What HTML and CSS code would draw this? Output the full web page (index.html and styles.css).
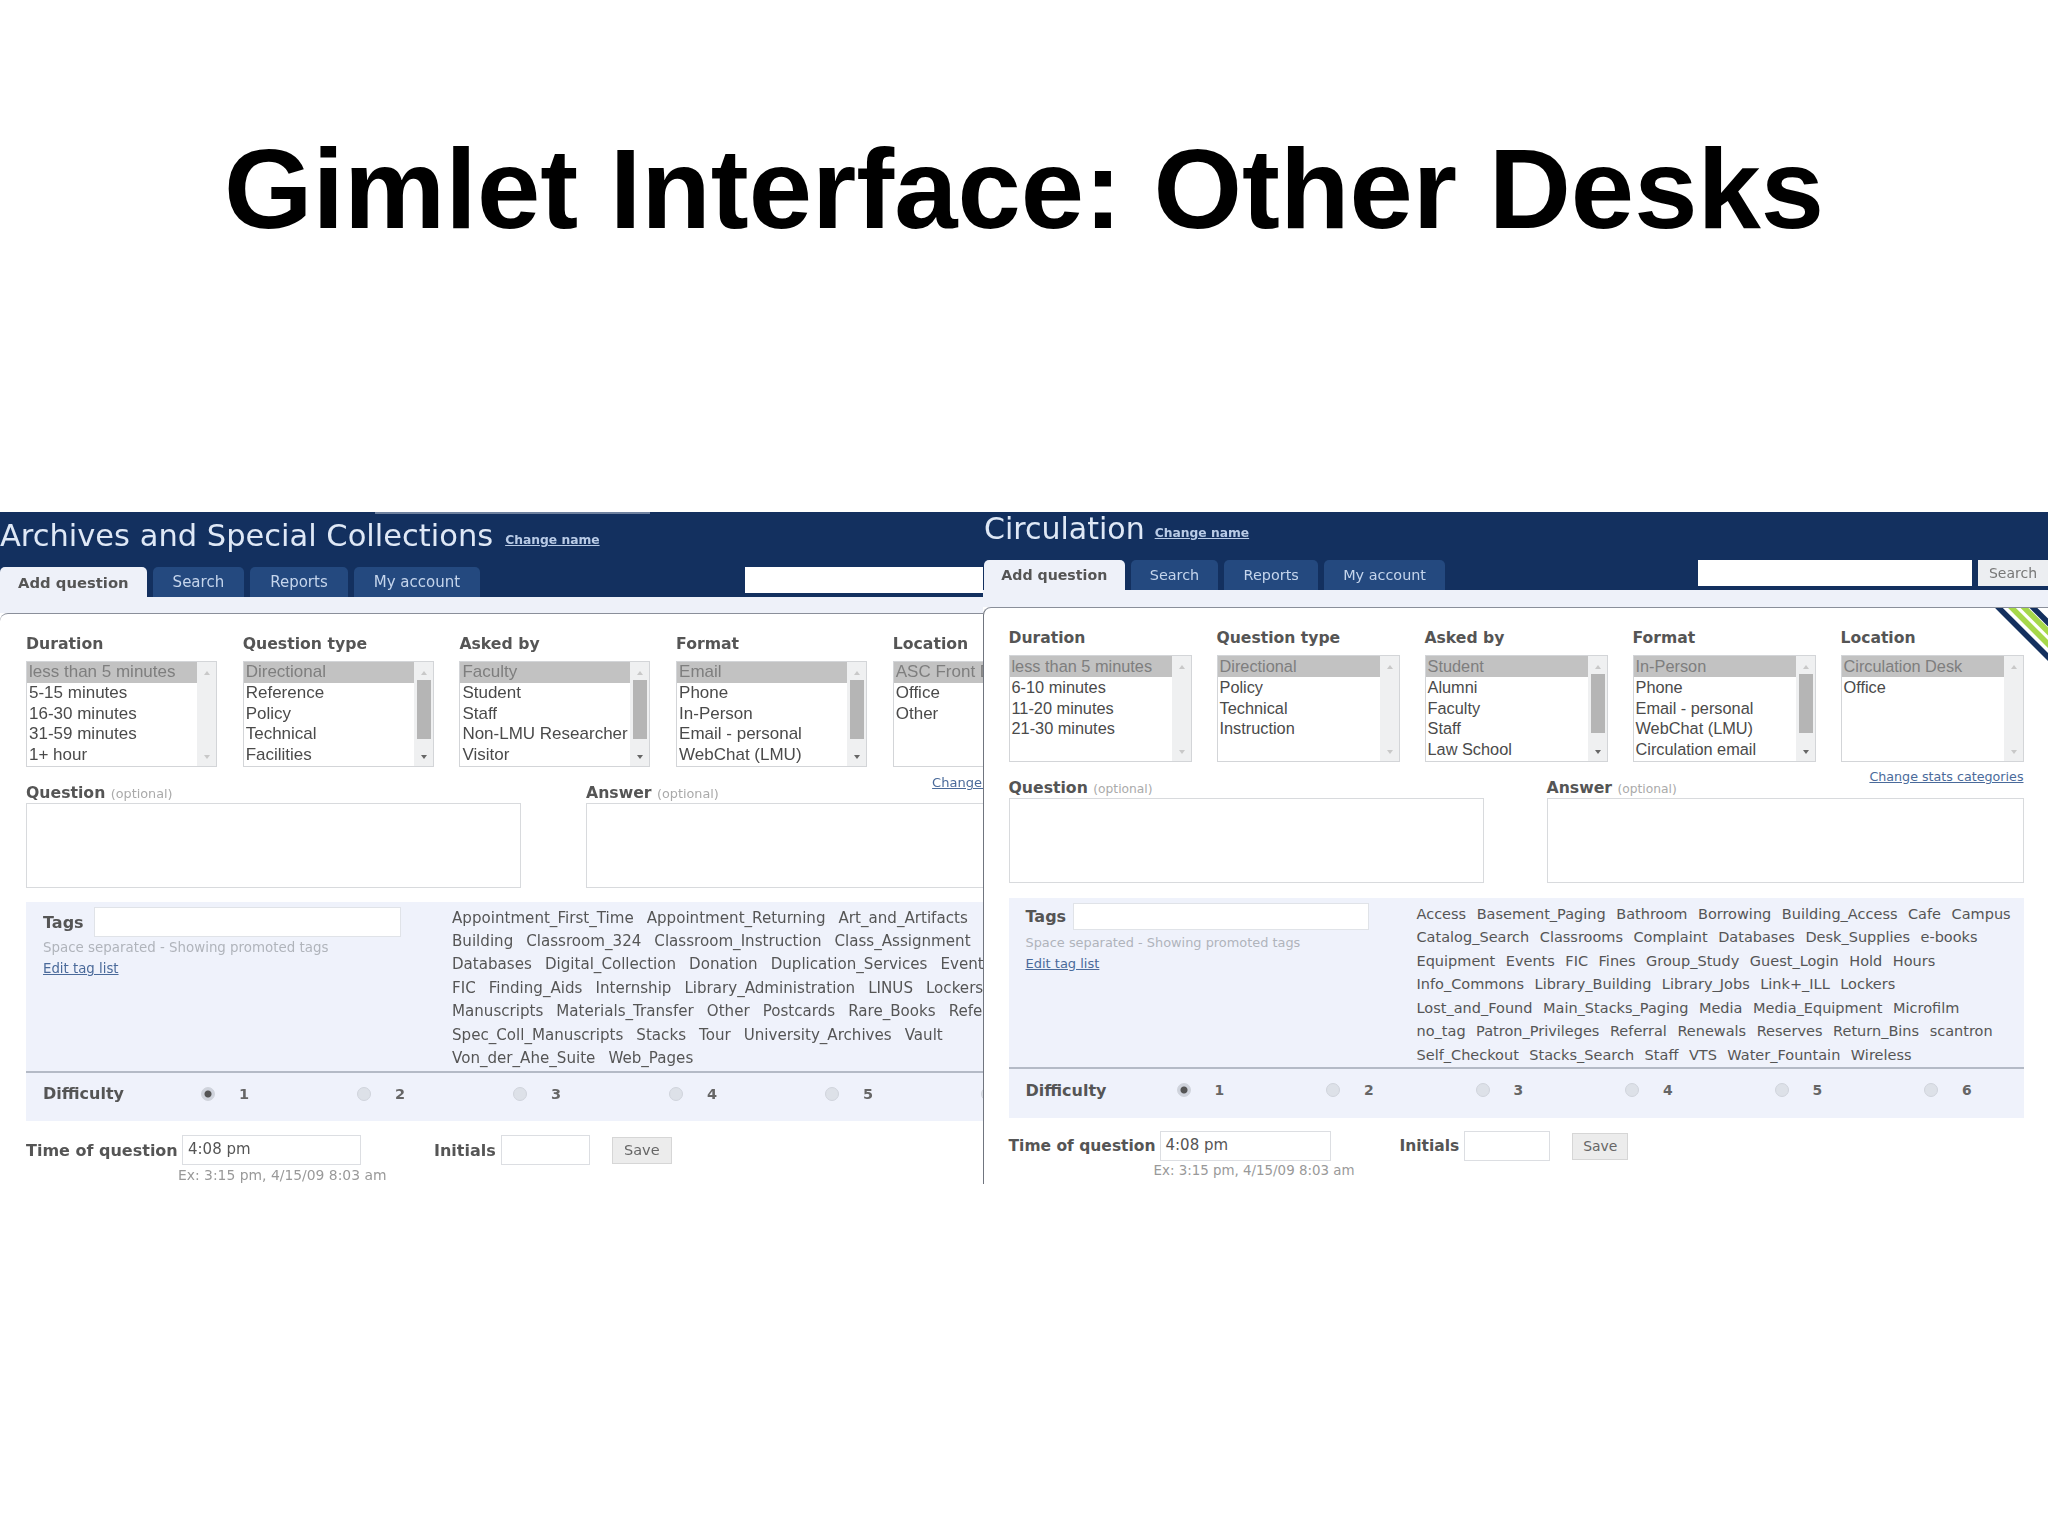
FILE: index.html
```html
<!DOCTYPE html>
<html lang="en">
<head>
<meta charset="utf-8">
<title>Gimlet Interface: Other Desks</title>
<link rel="stylesheet" href="styles.css">
</head>
<body>
<header class="slide-head"><h1>Gimlet Interface: Other Desks</h1></header>
<div class="shots">

<section class="panel left">
  <div class="inner">
    <div class="hd">
      <div class="title-row"><span class="desk">Archives and Special Collections</span><a class="rename">Change name</a></div>
      <nav class="nav">
        <a class="tab on">Add question</a><a class="tab">Search</a><a class="tab">Reports</a><a class="tab">My account</a>
        <div class="srch"><span class="srch-in"></span></div>
      </nav>
    </div>
    <div class="band"></div>
    <main class="main">
      <div class="lists">
        <div class="col"><div class="lab">Duration</div>
          <div class="sel"><div class="opts"><div class="opt on">less than 5 minutes</div><div class="opt">5-15 minutes</div><div class="opt">16-30 minutes</div><div class="opt">31-59 minutes</div><div class="opt">1+ hour</div></div><div class="sb"><i class="up"></i><i class="dn"></i></div></div></div>
        <div class="col"><div class="lab">Question type</div>
          <div class="sel"><div class="opts"><div class="opt on">Directional</div><div class="opt">Reference</div><div class="opt">Policy</div><div class="opt">Technical</div><div class="opt">Facilities</div></div><div class="sb live"><i class="up"></i><b class="thumb"></b><i class="dn"></i></div></div></div>
        <div class="col"><div class="lab">Asked by</div>
          <div class="sel"><div class="opts"><div class="opt on">Faculty</div><div class="opt">Student</div><div class="opt">Staff</div><div class="opt">Non-LMU Researcher</div><div class="opt">Visitor</div></div><div class="sb live"><i class="up"></i><b class="thumb"></b><i class="dn"></i></div></div></div>
        <div class="col"><div class="lab">Format</div>
          <div class="sel"><div class="opts"><div class="opt on">Email</div><div class="opt">Phone</div><div class="opt">In-Person</div><div class="opt">Email - personal</div><div class="opt">WebChat (LMU)</div></div><div class="sb live"><i class="up"></i><b class="thumb"></b><i class="dn"></i></div></div></div>
        <div class="col"><div class="lab">Location</div>
          <div class="sel"><div class="opts"><div class="opt on">ASC Front Desk</div><div class="opt">Office</div><div class="opt">Other</div></div><div class="sb"><i class="up"></i><i class="dn"></i></div></div></div>
      </div>
      <div class="qa">
        <div class="qa-col"><div class="qa-head"><span class="lab2">Question <small>(optional)</small></span></div><div class="ta"></div></div>
        <div class="qa-col"><div class="qa-head"><span class="lab2">Answer <small>(optional)</small></span><a class="cats">Change stats categories</a></div><div class="ta"></div></div>
      </div>
      <div class="tags">
        <div class="tags-side">
          <div class="tags-row"><span class="lab3">Tags</span><span class="tag-in"></span></div>
          <div class="hint">Space separated - Showing promoted tags</div>
          <a class="edit">Edit tag list</a>
        </div>
        <div class="tag-list">
          <div class="tl"><span>Appointment_First_Time</span><span>Appointment_Returning</span><span>Art_and_Artifacts</span></div>
          <div class="tl"><span>Building</span><span>Classroom_324</span><span>Classroom_Instruction</span><span>Class_Assignment</span></div>
          <div class="tl"><span>Databases</span><span>Digital_Collection</span><span>Donation</span><span>Duplication_Services</span><span>Events</span></div>
          <div class="tl"><span>FIC</span><span>Finding_Aids</span><span>Internship</span><span>Library_Administration</span><span>LINUS</span><span>Lockers</span></div>
          <div class="tl"><span>Manuscripts</span><span>Materials_Transfer</span><span>Other</span><span>Postcards</span><span>Rare_Books</span><span>Reference</span></div>
          <div class="tl"><span>Spec_Coll_Manuscripts</span><span>Stacks</span><span>Tour</span><span>University_Archives</span><span>Vault</span></div>
          <div class="tl"><span>Von_der_Ahe_Suite</span><span>Web_Pages</span></div>
        </div>
      </div>
      <div class="diff">
        <span class="lab3 diff-lab">Difficulty</span>
        <span class="lvl"><i class="radio on"></i>1</span><span class="lvl"><i class="radio"></i>2</span><span class="lvl"><i class="radio"></i>3</span><span class="lvl"><i class="radio"></i>4</span><span class="lvl"><i class="radio"></i>5</span><span class="lvl"><i class="radio"></i>6</span>
      </div>
      <div class="when">
        <span class="lab4 l-time">Time of question</span><span class="in time">4:08 pm</span>
        <span class="lab4 l-init">Initials</span><span class="in init"></span><span class="save">Save</span>
      </div>
      <div class="ex">Ex: 3:15 pm, 4/15/09 8:03 am</div>
    </main>
  </div>
</section>

<section class="panel right">
  <div class="inner">
    <div class="hd">
      <div class="title-row"><span class="desk">Circulation</span><a class="rename">Change name</a></div>
      <nav class="nav">
        <a class="tab on">Add question</a><a class="tab">Search</a><a class="tab">Reports</a><a class="tab">My account</a>
        <div class="srch"><span class="srch-in"></span><span class="srch-btn">Search</span></div>
      </nav>
    </div>
    <div class="band"></div>
    <main class="main">
      <svg class="ribbon" width="53" height="54" viewBox="0 0 53 54" aria-hidden="true">
        <g fill="none" stroke-width="5.5">
          <path d="M-16 -20L64 60" stroke="#14305f"/>
          <path d="M-3 -20L77 60" stroke="#a6d84a"/>
          <path d="M9.5 -20L89.5 60" stroke="#a6d84a"/>
          <path d="M18.5 -20L98.5 60" stroke="#14305f"/>
        </g>
      </svg>
      <div class="lists">
        <div class="col"><div class="lab">Duration</div>
          <div class="sel"><div class="opts"><div class="opt on">less than 5 minutes</div><div class="opt">6-10 minutes</div><div class="opt">11-20 minutes</div><div class="opt">21-30 minutes</div></div><div class="sb"><i class="up"></i><i class="dn"></i></div></div></div>
        <div class="col"><div class="lab">Question type</div>
          <div class="sel"><div class="opts"><div class="opt on">Directional</div><div class="opt">Policy</div><div class="opt">Technical</div><div class="opt">Instruction</div></div><div class="sb"><i class="up"></i><i class="dn"></i></div></div></div>
        <div class="col"><div class="lab">Asked by</div>
          <div class="sel"><div class="opts"><div class="opt on">Student</div><div class="opt">Alumni</div><div class="opt">Faculty</div><div class="opt">Staff</div><div class="opt">Law School</div></div><div class="sb live"><i class="up"></i><b class="thumb"></b><i class="dn"></i></div></div></div>
        <div class="col"><div class="lab">Format</div>
          <div class="sel"><div class="opts"><div class="opt on">In-Person</div><div class="opt">Phone</div><div class="opt">Email - personal</div><div class="opt">WebChat (LMU)</div><div class="opt">Circulation email</div></div><div class="sb live"><i class="up"></i><b class="thumb"></b><i class="dn"></i></div></div></div>
        <div class="col"><div class="lab">Location</div>
          <div class="sel"><div class="opts"><div class="opt on">Circulation Desk</div><div class="opt">Office</div></div><div class="sb"><i class="up"></i><i class="dn"></i></div></div></div>
      </div>
      <div class="qa">
        <div class="qa-col"><div class="qa-head"><span class="lab2">Question <small>(optional)</small></span></div><div class="ta"></div></div>
        <div class="qa-col"><div class="qa-head"><span class="lab2">Answer <small>(optional)</small></span><a class="cats">Change stats categories</a></div><div class="ta"></div></div>
      </div>
      <div class="tags">
        <div class="tags-side">
          <div class="tags-row"><span class="lab3">Tags</span><span class="tag-in"></span></div>
          <div class="hint">Space separated - Showing promoted tags</div>
          <a class="edit">Edit tag list</a>
        </div>
        <div class="tag-list">
          <div class="tl"><span>Access</span><span>Basement_Paging</span><span>Bathroom</span><span>Borrowing</span><span>Building_Access</span><span>Cafe</span><span>Campus</span></div>
          <div class="tl"><span>Catalog_Search</span><span>Classrooms</span><span>Complaint</span><span>Databases</span><span>Desk_Supplies</span><span>e-books</span></div>
          <div class="tl"><span>Equipment</span><span>Events</span><span>FIC</span><span>Fines</span><span>Group_Study</span><span>Guest_Login</span><span>Hold</span><span>Hours</span></div>
          <div class="tl"><span>Info_Commons</span><span>Library_Building</span><span>Library_Jobs</span><span>Link+_ILL</span><span>Lockers</span></div>
          <div class="tl"><span>Lost_and_Found</span><span>Main_Stacks_Paging</span><span>Media</span><span>Media_Equipment</span><span>Microfilm</span></div>
          <div class="tl"><span>no_tag</span><span>Patron_Privileges</span><span>Referral</span><span>Renewals</span><span>Reserves</span><span>Return_Bins</span><span>scantron</span></div>
          <div class="tl"><span>Self_Checkout</span><span>Stacks_Search</span><span>Staff</span><span>VTS</span><span>Water_Fountain</span><span>Wireless</span></div>
        </div>
      </div>
      <div class="diff">
        <span class="lab3 diff-lab">Difficulty</span>
        <span class="lvl"><i class="radio on"></i>1</span><span class="lvl"><i class="radio"></i>2</span><span class="lvl"><i class="radio"></i>3</span><span class="lvl"><i class="radio"></i>4</span><span class="lvl"><i class="radio"></i>5</span><span class="lvl"><i class="radio"></i>6</span>
      </div>
      <div class="when">
        <span class="lab4 l-time">Time of question</span><span class="in time">4:08 pm</span>
        <span class="lab4 l-init">Initials</span><span class="in init"></span><span class="save">Save</span>
      </div>
      <div class="ex">Ex: 3:15 pm, 4/15/09 8:03 am</div>
    </main>
  </div>
</section>

</div>
</body>
</html>
```
FILE: styles.css
```css
* { box-sizing: border-box; }
html, body { margin: 0; padding: 0; background: #fff; }
body { width: 2048px; height: 1536px; overflow: hidden; font-family: "DejaVu Sans", sans-serif; color: #555; }

.slide-head { height: 512px; padding-top: 132px; }
h1 { margin: 0; font: bold 113.8px/1 "Liberation Sans", Arial, sans-serif; color: #000; text-align: center; }

.shots { display: flex; height: 672px; }
.panel { height: 672px; overflow: hidden; filter: blur(.7px); flex: none; }
.inner { height: 100%; }

.left {
  width: 983px;
  --inner: 1095px; --title: 30.5px; --title-pb: 7px; --row: 55px; --band: 16px; --k: 1;
  --col: 216.7px; --sel: 191px; --pad: 26px; --sel-h: 106px; --tagcol: 426px; --tag-lh: 23.4px;
  --qa-t: 18px; --tags-t: 14px; --tag-fs: 15.1px; --tag-gap: 13px; --tag-lab-gap: 10px;
  --qa-gap: 65px; --ta1: 495px; --ta2: 504px; --tags-w: 1060px; --tag-in: 307px; --tag-in-h: 30px; --tag-pt: 4px;
  --diff-lab: 158px; --lvl: 156px; --diff-h: 48px; --when-t: 14px;
  --time-lab: 156px; --time-w: 179px; --init-ml: 73px; --init-w: 89px; --when-h: 30px; --save-w: 60px;
  --gap-name: 12px; --ex-ml: 152px; --srch-mr: 76px;
  --lab4: 16px; --hint: 13.4px; --hint-t: 4px; --ex: 13.9px; --cats: 13px; --cats-t: -19px;
}
.right {
  width: 1065px;
  --inner: 1065px; --title: 30px; --title-pb: 14px; --row: 48px; --band: 17px; --k: .96;
  --col: 208px; --sel: 183px; --pad: 26px; --sel-h: 107px; --tagcol: 408px; --tag-lh: 23.5px;
  --qa-t: 18px; --tags-t: 15px; --tag-fs: 14.5px; --tag-gap: 10.5px; --tag-lab-gap: 7px;
  --qa-gap: 63px; --ta1: 475px; --ta2: 477px; --tags-w: 1015px; --tag-in: 296px; --tag-in-h: 27px; --tag-pt: 4px;
  --diff-lab: 151px; --lvl: 149.5px; --diff-h: 49px; --when-t: 13px;
  --time-lab: 151px; --time-w: 171px; --init-ml: 69px; --init-w: 86px; --when-h: 30px; --save-w: 56px;
  --gap-name: 10px; --ex-ml: 145px; --srch-mr: 0px;
  --lab4: 15.5px; --hint: 12.9px; --hint-t: 5.5px; --ex: 13.4px; --cats: 12.7px; --cats-t: -21px;
}
.inner { width: var(--inner); }

/* header */
.hd { position: relative; background: #13305f; }
.left .hd::before { content: ""; position: absolute; left: 375px; top: 0; width: 275px; height: 2px; background: #6f819f; }
.title-row { height: var(--row); padding-bottom: var(--title-pb); display: flex; align-items: center; }
.desk { font-size: var(--title); line-height: 1; color: #dfe8f6; white-space: nowrap; }
.right .desk { margin-left: 1px; }
.rename { margin: 8px 0 0 var(--gap-name); font-size: 12.3px; font-weight: bold; color: #b9cbe6; text-decoration: underline; white-space: nowrap; }
.nav { height: 30px; display: flex; align-items: flex-end; gap: 6px; }
.right .nav { padding-left: 1px; }
.tab { height: 30px; padding: 0 calc(20px * var(--k)); display: flex; align-items: center; background: #24497f; color: #c5d5ec; font-size: calc(15px * var(--k)); border-radius: 5px 5px 0 0; white-space: nowrap; }
.tab.on { padding: 0 calc(18px * var(--k)); background: #eef1f9; color: #555; font-size: calc(14.8px * var(--k)); font-weight: bold; }
.srch { margin-left: auto; margin-right: var(--srch-mr); align-self: flex-start; display: flex; gap: 6px; }
.srch-in { width: 274px; height: 26px; background: #fff; }
.srch-btn { width: 70px; height: 26px; background: #eceef1; color: #777; font-size: 14px; display: flex; align-items: center; justify-content: center; }

.band { height: var(--band); background: #eef1f9; }

/* main */
.main { position: relative; height: 100%; background: #fff; border-top: 1.5px solid #8a8f9a; border-top-left-radius: 8px; padding: 21px 0 0 var(--pad); }
.right .main { border-left: 1.5px solid #70757f; padding-left: calc(var(--pad) - 1.5px); }
.ribbon { position: absolute; top: 0; right: 0; }

.lists { display: grid; grid-template-columns: repeat(5, var(--col)); }
.lab { height: 18px; margin-bottom: 8px; font-size: calc(15.7px * var(--k)); line-height: 18px; font-weight: bold; color: #555; white-space: nowrap; }
.right .lab { font-size: 15.6px; }
.sel { width: var(--sel); height: var(--sel-h); display: flex; border: 1px solid #d3d5d8; background: #fff; }
.opts { flex: 1; min-width: 0; }
.opt { height: 20.8px; padding-left: 2px; font: calc(17px * var(--k))/20.8px "Liberation Sans", Arial, sans-serif; color: #4a4a4a; white-space: nowrap; overflow: hidden; }
.opt.on { background: #c2c2c2; color: #7e7e7e; }
.sb { width: 19px; flex: none; background: #eff0f1; position: relative; }
.thumb { position: absolute; left: 3px; right: 2px; top: 18px; height: 59px; background: #b5b5b5; }
.up, .dn { position: absolute; left: 7px; width: 0; height: 0; border-left: 3px solid transparent; border-right: 3px solid transparent; }
.up { top: 9px; border-bottom: 4px solid #c8c8c8; }
.dn { bottom: 7px; border-top: 4px solid #c8c8c8; }
.live .dn { border-top-color: #666; }

.qa { display: flex; gap: var(--qa-gap); margin-top: var(--qa-t); }
.qa-col:first-child { width: var(--ta1); }
.qa-col:last-child { width: var(--ta2); }
.qa-head { height: 14px; margin-bottom: 4px; display: flex; justify-content: space-between; align-items: center; }
.lab2 { font-size: 15.7px; font-weight: bold; color: #555; white-space: nowrap; }
.lab2 small { font-size: calc(12.8px * var(--k)); font-weight: normal; color: #aaa; }
.cats { margin-top: var(--cats-t); font-size: var(--cats); color: #4a6a9a; text-decoration: underline; white-space: nowrap; }
.ta { height: 85px; border: 1.5px solid #d8dadd; background: #fff; }

.tags { margin-top: var(--tags-t); width: var(--tags-w); height: 171px; display: flex; background: #eff2fb; border-bottom: 2px solid #b4bac6; padding-top: var(--tag-pt); }
.tags-side { width: var(--tagcol); padding-left: 17px; flex: none; }
.tags-row { display: flex; align-items: center; gap: var(--tag-lab-gap); padding-top: 1px; }
.lab3 { font-size: 16px; font-weight: bold; color: #555; white-space: nowrap; }
.tag-in { width: var(--tag-in); height: var(--tag-in-h); background: #fff; border: 1px solid #e0e3e8; }
.hint { margin-top: var(--hint-t); font-size: var(--hint); line-height: 14px; color: #b0b4bb; white-space: nowrap; }
.edit { display: block; margin-top: 7px; font-size: 13.3px; line-height: 14px; color: #4a6a9a; text-decoration: underline; }
.right .edit { font-size: 13px; }
.tag-list { flex: none; }
.tl { height: var(--tag-lh); display: flex; align-items: center; gap: var(--tag-gap); font-size: var(--tag-fs); color: #555; white-space: nowrap; }

.diff { width: var(--tags-w); height: var(--diff-h); background: #eff2fb; display: flex; align-items: center; padding: 0 0 7px 17px; }
.diff-lab { width: var(--diff-lab); flex: none; }
.lvl { width: var(--lvl); flex: none; display: flex; align-items: center; gap: 24px; font-size: calc(14.5px * var(--k)); font-weight: bold; color: #666; }
.radio { width: 14px; height: 14px; border-radius: 50%; background: #dde1e8; border: 1px solid #d0d4dc; }
.radio.on { background: radial-gradient(circle, #555 0 3px, #cfd3dc 4px); }

.when { margin-top: var(--when-t); height: var(--when-h); display: flex; align-items: center; }
.lab4 { font-size: var(--lab4); font-weight: bold; color: #555; white-space: nowrap; }
.l-time { width: var(--time-lab); flex: none; }
.in { height: var(--when-h); border: 1.5px solid #dcdee2; background: #fff; font-size: 15px; line-height: 27px; padding-left: 5px; color: #555; flex: none; }
.time { width: var(--time-w); }
.init { width: var(--init-w); margin-left: 5px; }
.l-init { margin-left: var(--init-ml); }
.save { width: var(--save-w); height: 27px; margin-left: 22px; background: #ececec; border: 1.5px solid #d6d6d6; color: #666; font-size: calc(14.5px * var(--k)); display: flex; align-items: center; justify-content: center; flex: none; }
.ex { margin: 3px 0 0 var(--ex-ml); font-size: var(--ex); line-height: 14px; color: #999; white-space: nowrap; }
```
